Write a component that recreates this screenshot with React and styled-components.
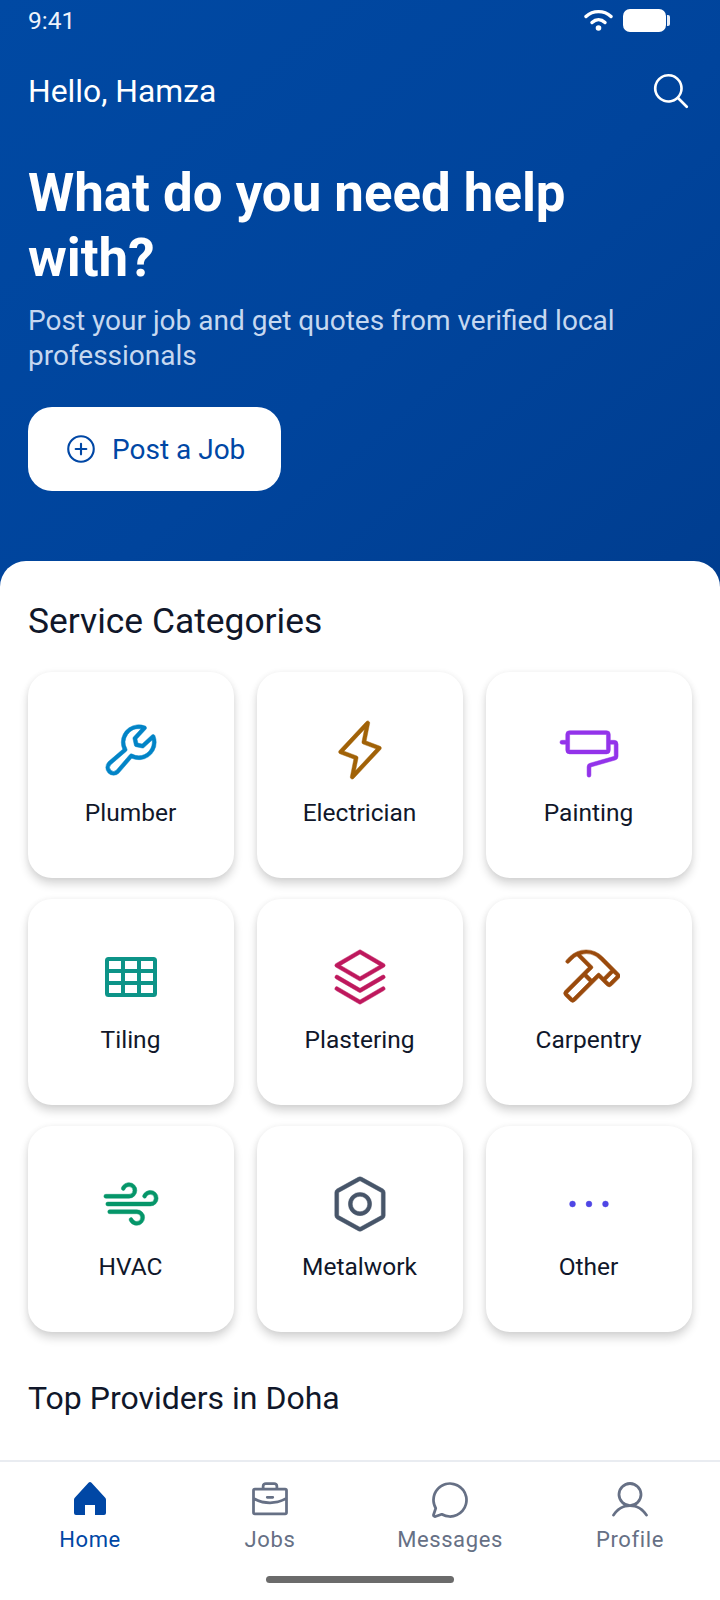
import React from 'react';
import styled, { createGlobalStyle } from 'styled-components';
import {
  PiWrench,
  PiLightning,
  PiPaintRoller,
  PiStack,
  PiHammer,
  PiWind,
  PiNut,
  PiDotsThree,
  PiMagnifyingGlass,
  PiPlusCircle,
  PiBriefcase,
  PiChatCircle,
  PiUser,
} from 'react-icons/pi';

const GlobalStyle = createGlobalStyle`
  html, body { margin: 0; padding: 0; background: #fff; }
  body { font-family: Roboto, "Liberation Sans", sans-serif; }
`;

const Screen = styled.div`
  width: 720px;
  height: 1600px;
  display: flex;
  flex-direction: column;
  overflow: hidden;
  background: #fff;
`;

const Hero = styled.header`
  height: 600px;
  flex: none;
  box-sizing: border-box;
  padding: 0 28px;
  background: linear-gradient(140deg, #0049a3 0%, #00449c 55%, #003d8f 100%);
  color: #fff;
`;

const StatusBar = styled.div`
  height: 40px;
  display: flex;
  align-items: center;
  justify-content: space-between;
  font-size: 24.5px;
  color: #eef3fb;
`;

const StatusIcons = styled.div`
  display: flex;
  align-items: center;
  gap: 10px;
  margin-right: 26px;
`;

const Battery = styled.span`
  position: relative;
  display: block;
  width: 43px;
  height: 23px;
  border-radius: 7px;
  background: #fff;
  &::after {
    content: '';
    position: absolute;
    left: 44px;
    top: 6px;
    width: 3px;
    height: 11px;
    border-radius: 0 2px 2px 0;
    background: #e8eef8;
  }
`;

const GreetRow = styled.div`
  display: flex;
  align-items: center;
  justify-content: space-between;
  margin-top: 30px;
  height: 42px;
`;

const Greeting = styled.div`
  font-size: 31.8px;
`;

const Title = styled.h1`
  margin: 49px 0 0;
  max-width: 600px;
  font-size: 52.8px;
  line-height: 65px;
  font-weight: 700;
`;

const Subtitle = styled.p`
  margin: 12px 0 0;
  font-size: 28px;
  line-height: 35px;
  color: #c6d8f0;
`;

const PostButton = styled.button`
  margin-top: 34px;
  width: 253px;
  height: 84px;
  border: 0;
  border-radius: 24px;
  background: #fff;
  color: #0047a5;
  font: 400 28px Roboto, sans-serif;
  display: flex;
  align-items: center;
  gap: 14px;
  padding: 0 0 0 36px;
`;

const Sheet = styled.main`
  flex: 1;
  min-height: 0;
  margin-top: -39px;
  border-radius: 26px 26px 0 0;
  background: #fff;
  padding: 0 28px;
  overflow: hidden;
`;

const SectionTitle = styled.h2`
  margin: 0;
  padding-top: ${(p) => p.$top}px;
  font-size: ${(p) => p.$size}px;
  line-height: 40px;
  font-weight: 400;
  color: #10172a;
`;

const Grid = styled.div`
  margin-top: 31px;
  display: grid;
  grid-template-columns: repeat(3, 206px);
  grid-auto-rows: 206px;
  column-gap: 23px;
  row-gap: 21px;
`;

const Card = styled.div`
  border-radius: 24px;
  background: #fff;
  box-shadow: 0 6px 10px rgba(0, 0, 0, 0.16), 0 0 6px rgba(0, 0, 0, 0.05);
  display: flex;
  flex-direction: column;
  align-items: center;
  padding: 47px 1px 0 0;
  box-sizing: border-box;
`;

const IconSlot = styled.div`
  width: 62px;
  height: 62px;
  display: flex;
  align-items: center;
  justify-content: center;
  color: ${(p) => p.$color};
  font-size: 62px;
  & > svg {
    stroke: currentColor;
    stroke-width: 2;
  }
`;

const CardLabel = styled.div`
  margin-top: 16px;
  font-size: 24.5px;
  line-height: 32px;
  color: #10172a;
`;

const BottomNav = styled.nav`
  flex: none;
  position: relative;
  height: 138px;
  border-top: 2px solid #e9ecf1;
  display: grid;
  grid-template-columns: repeat(4, 180px);
  background: #fff;
`;

const NavItem = styled.div`
  display: flex;
  flex-direction: column;
  align-items: center;
  padding-top: 16px;
  color: ${(p) => (p.$active ? '#0047a5' : '#667085')};
  font-size: 22px;
  letter-spacing: 0.6px;
`;

const NavLabel = styled.span`
  margin-top: 3px;
  line-height: 30px;
`;

const HomeBar = styled.div`
  position: absolute;
  left: 266px;
  bottom: 17px;
  width: 188px;
  height: 7px;
  border-radius: 4px;
  background: #6b6b6b;
`;

function WifiIcon() {
  return (
    <svg width="29" height="22" viewBox="0 0 29 22" fill="none" stroke="#fff" strokeWidth="3.4" strokeLinecap="round">
      <path d="M2 7.5C9 1 20 1 27 7.5" />
      <path d="M8 13.5C12 9.7 17 9.7 21 13.5" />
      <circle cx="14.5" cy="19" r="2.8" fill="#fff" stroke="none" />
    </svg>
  );
}

function TileIcon() {
  return (
    <svg width="52" height="40" viewBox="0 0 52 40" fill="none" strokeLinejoin="round" style={{ strokeWidth: 4 }}>
      <rect x="2" y="2" width="48" height="36" rx="1.5" />
      <path d="M18 2v36M34 2v36M2 14h48M2 26h48" />
    </svg>
  );
}

function HomeIcon() {
  return (
    <svg width="44" height="44" viewBox="-6 -4 44 44" fill="currentColor">
      <path d="M14.5.8a2 2 0 0 1 3 0L31 15.5a3 3 0 0 1 1 2.2V31a2 2 0 0 1-2 2h-9V23H11v10H2a2 2 0 0 1-2-2V17.7a3 3 0 0 1 1-2.2Z" />
    </svg>
  );
}

const categories = [
  { label: 'Plumber', Icon: PiWrench, color: '#0284c7' },
  { label: 'Electrician', Icon: PiLightning, color: '#a16207' },
  { label: 'Painting', Icon: PiPaintRoller, color: '#9333ea' },
  { label: 'Tiling', Icon: TileIcon, color: '#0d9488' },
  { label: 'Plastering', Icon: PiStack, color: '#be185d' },
  { label: 'Carpentry', Icon: PiHammer, color: '#9a4a0c' },
  { label: 'HVAC', Icon: PiWind, color: '#059669' },
  { label: 'Metalwork', Icon: PiNut, color: '#475569' },
  { label: 'Other', Icon: PiDotsThree, color: '#4f46e5' },
];

const navItems = [
  { label: 'Home', Icon: HomeIcon, active: true },
  { label: 'Jobs', Icon: PiBriefcase },
  { label: 'Messages', Icon: PiChatCircle },
  { label: 'Profile', Icon: PiUser },
];

export default function App() {
  return (
    <Screen>
      <GlobalStyle />
      <Hero>
        <StatusBar>
          <span>9:41</span>
          <StatusIcons>
            <WifiIcon />
            <Battery />
          </StatusIcons>
        </StatusBar>
        <GreetRow>
          <Greeting>Hello, Hamza</Greeting>
          <PiMagnifyingGlass size={42} />
        </GreetRow>
        <Title>What do you need help with?</Title>
        <Subtitle>Post your job and get quotes from verified local professionals</Subtitle>
        <PostButton>
          <PiPlusCircle size={34} />
          Post a Job
        </PostButton>
      </Hero>
      <Sheet>
        <SectionTitle $top={40} $size={35.4}>Service Categories</SectionTitle>
        <Grid>
          {categories.map(({ label, Icon, color }) => (
            <Card key={label}>
              <IconSlot $color={color}>
                <Icon />
              </IconSlot>
              <CardLabel>{label}</CardLabel>
            </Card>
          ))}
        </Grid>
        <SectionTitle $top={46} $size={32}>Top Providers in Doha</SectionTitle>
      </Sheet>
      <BottomNav>
        {navItems.map(({ label, Icon, active }) => (
          <NavItem key={label} $active={active}>
            <Icon size={44} />
            <NavLabel>{label}</NavLabel>
          </NavItem>
        ))}
        <HomeBar />
      </BottomNav>
    </Screen>
  );
}
